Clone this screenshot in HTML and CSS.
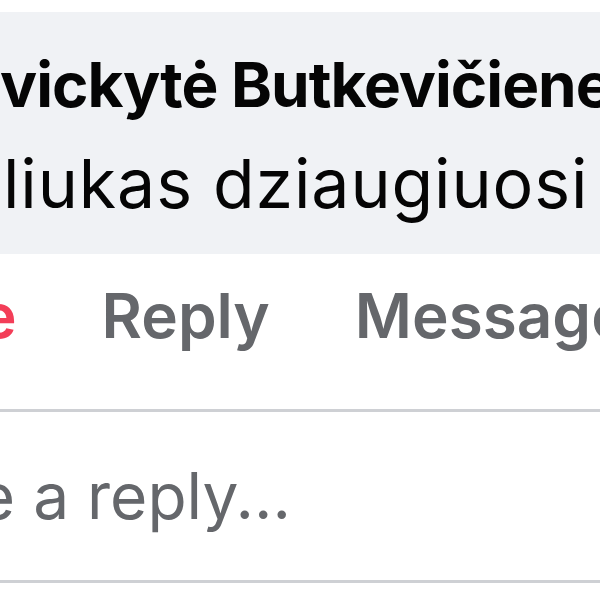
FILE: index.html
```
<html>

<head>
  <meta name="viewport" content="width=device-width, initial-scale=1">
  <link rel="stylesheet" href="styles.css">
</head>

<body>
  <div class="screen">
    <!-- Comment bubble -->
    <div class="bubble">
      <p class="author">vickytė Butkevičiene</p>
      <p class="comment">liukas dziaugiuosi</p>
    </div>

    <!-- Actions under the comment -->
    <div class="actions">
      <span class="action loved">Love</span>
      <span class="action">Reply</span>
      <span class="action">Message</span>
    </div>

    <hr class="divider">

    <!-- Reply box -->
    <div class="reply_box">Write a reply...</div>

    <hr class="divider">
  </div>
</body>

</html>
```

FILE: styles.css
```
body {
  margin: 0;
  background: #fff;
  font-family: Inter, 'Noto Sans', sans-serif;
  color: #050505;
}

.screen {
  width: 600px;
  height: 600px;
  overflow: hidden;
  padding-top: 12px;
  box-sizing: border-box;
}

p {
  margin: 0;
  white-space: nowrap;
}

.bubble {
  width: 760px;
  background: #f0f2f5;
  padding: 28px 0 18px 2px;
}

.author {
  font-size: 62px;
  font-weight: 700;
  line-height: 90px;
  letter-spacing: -1px;
  margin-left: -2px;
}

.comment {
  font-size: 68px;
  font-weight: 400;
  line-height: 106px;
  letter-spacing: 0.9px;
  margin-left: 1px;
}

.actions {
  display: flex;
  gap: 85px;
  margin: 22px 0 0 -127px;
  height: 80px;
  font-size: 62px;
  font-weight: 600;
  line-height: 80px;
  color: #65676b;
  white-space: nowrap;
}

.loved {
  color: #f33e58;
}

.divider {
  width: 800px;
  height: 3px;
  border: 0;
  margin: 53px 0 0 0;
  background: #ced0d4;
}

.reply_box {
  margin: 39px 0 0 -144px;
  font-size: 64px;
  line-height: 90px;
  color: #65676b;
  white-space: nowrap;
}

.reply_box + .divider {
  margin-top: 39px;
}
```
